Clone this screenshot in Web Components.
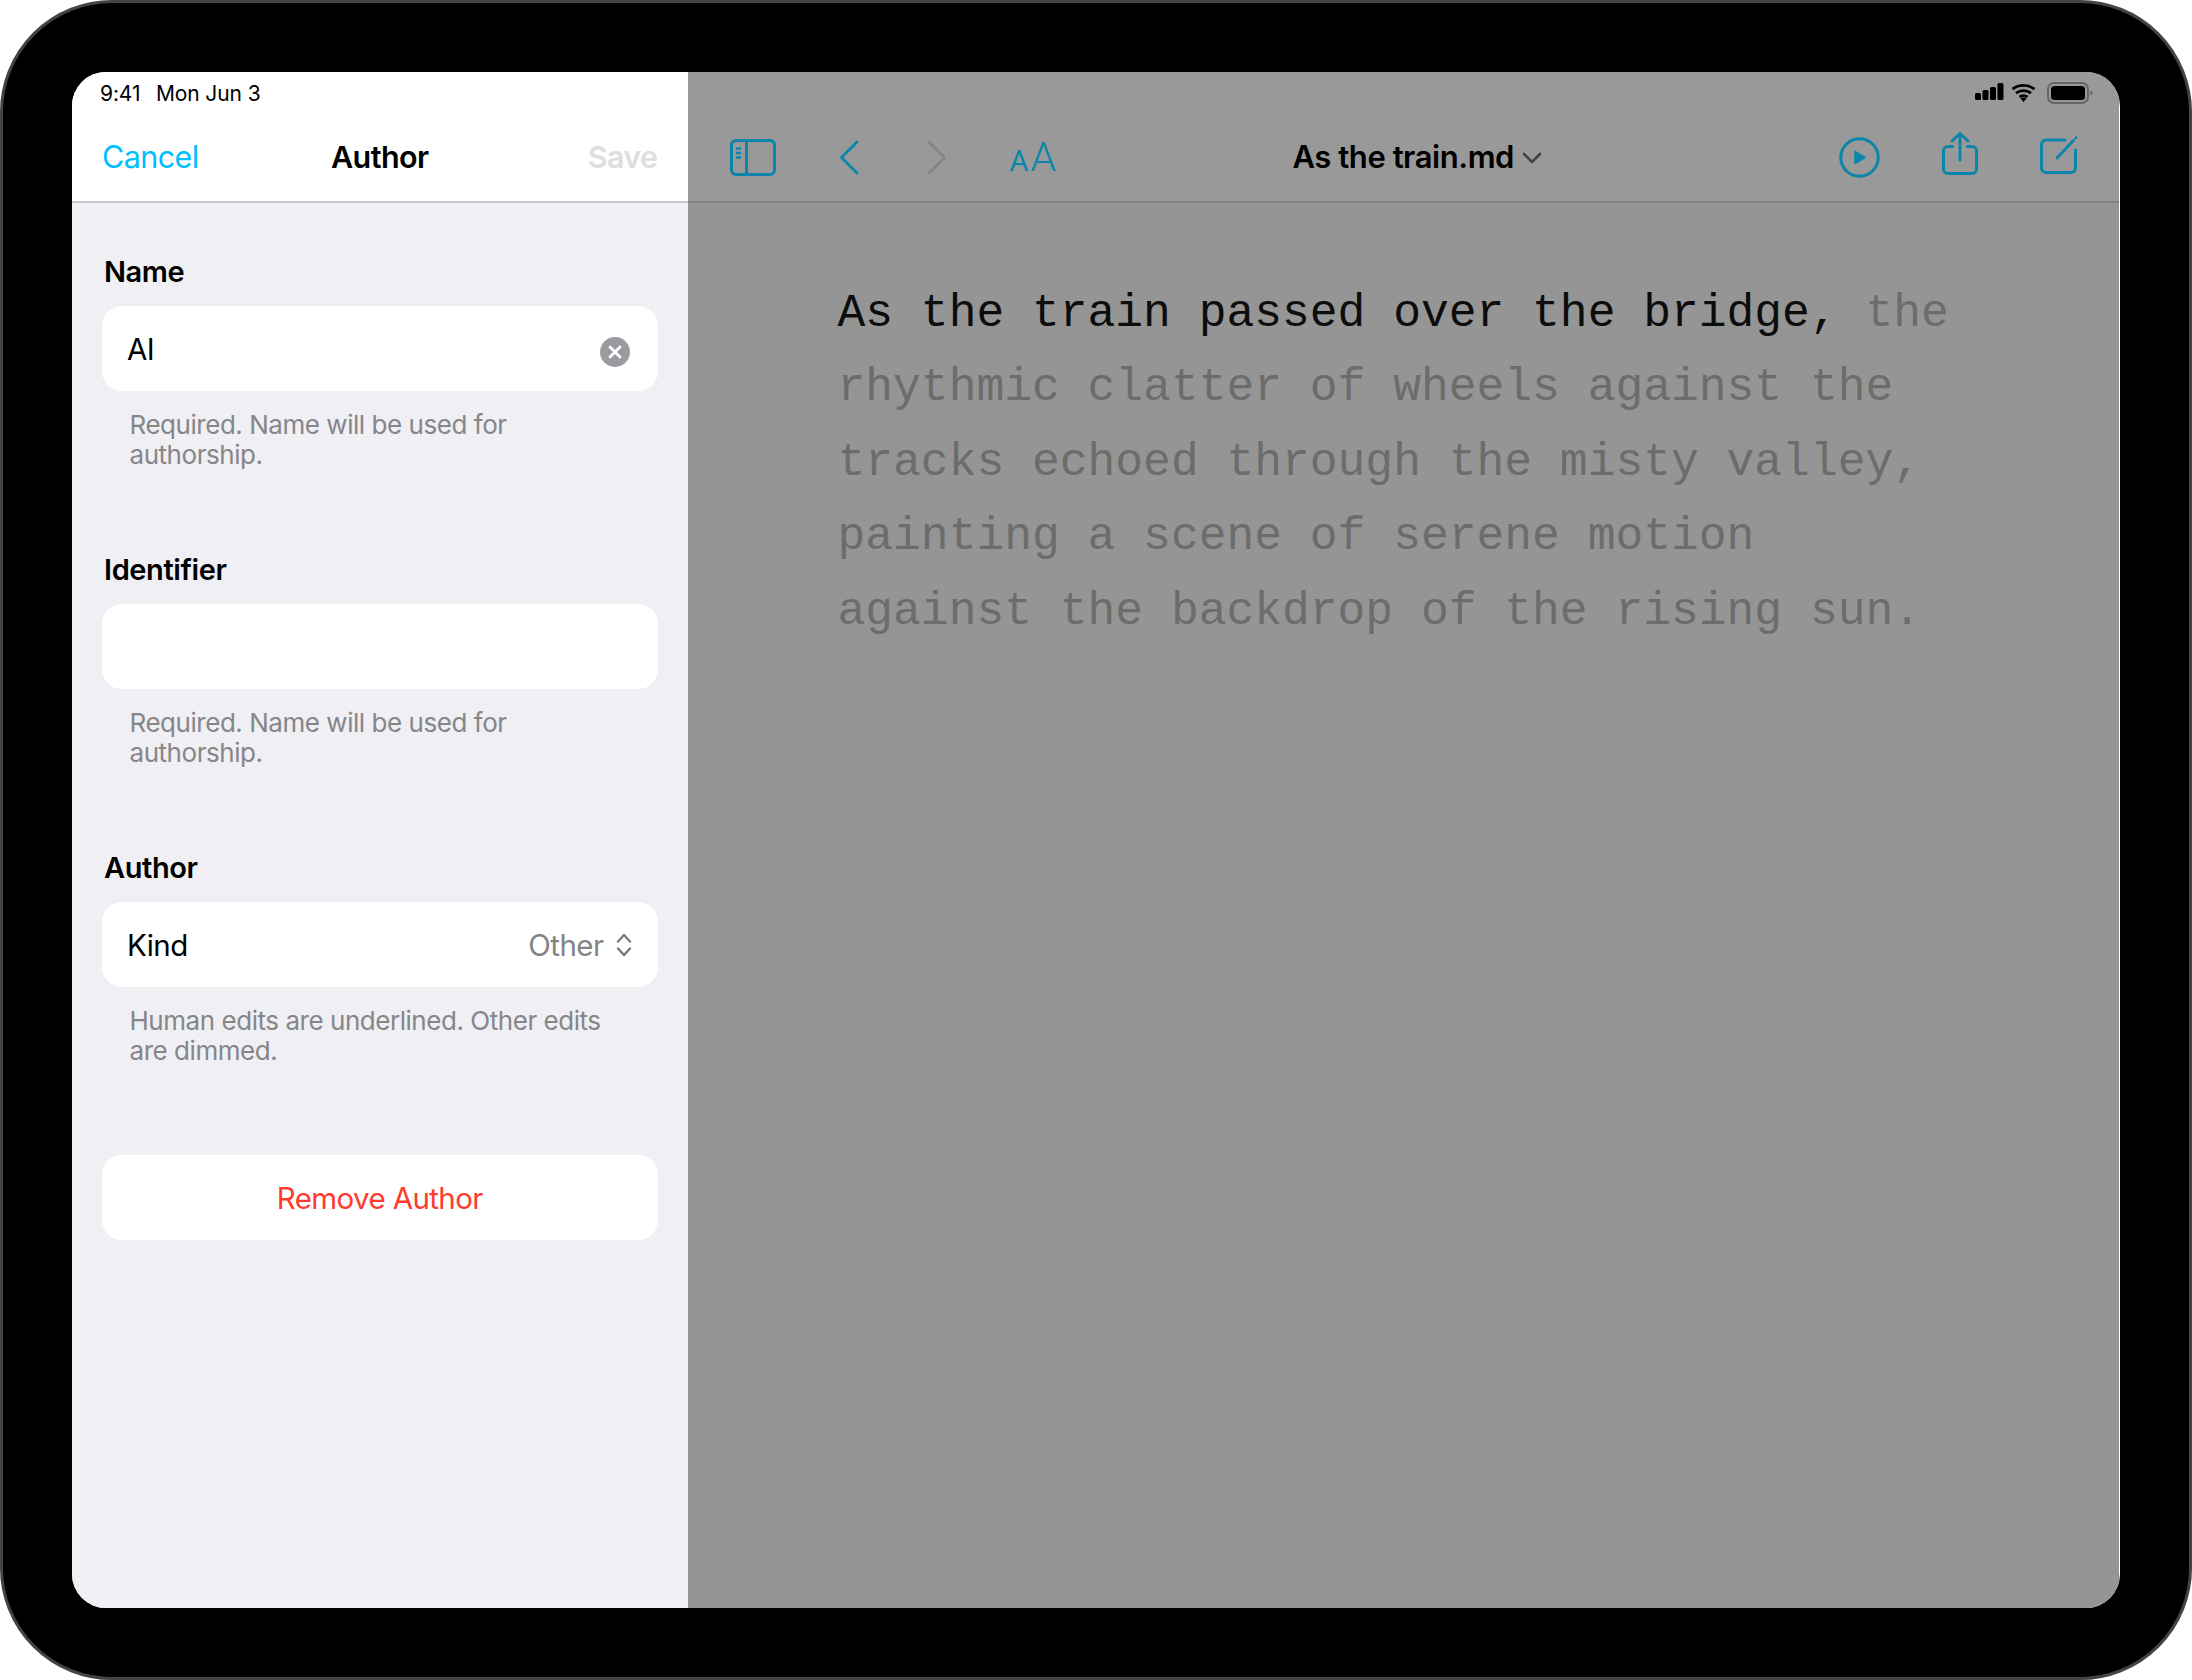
<!DOCTYPE html>
<html lang="en"><head><meta charset="utf-8"><title>Author</title>
<style>
html,body{margin:0;padding:0;background:#fff}
body{font-family:Inter,"Liberation Sans",sans-serif;width:2192px;height:1680px;overflow:hidden}
</style></head><body>
<ipad-frame>
  <author-sheet slot="side">
    <form-section label="Name" help-a="Required. Name will be used for" help-b="authorship.">
      <form-row value="AI" clear></form-row>
    </form-section>
    <form-section label="Identifier" help-a="Required. Name will be used for" help-b="authorship.">
      <form-row></form-row>
    </form-section>
    <form-section label="Author" help-a="Human edits are underlined. Other edits" help-b="are dimmed.">
      <form-row value="Kind" picker="Other"></form-row>
    </form-section>
    <danger-button>Remove Author</danger-button>
  </author-sheet>
  <editor-pane slot="main"></editor-pane>
</ipad-frame>
<script>
function def(name, css, html){
  customElements.define(name, class extends HTMLElement{
    connectedCallback(){
      if(this.shadowRoot) return;
      const r=this.attachShadow({mode:'open'});
      r.innerHTML='<style>'+css+'</style>'+(typeof html==='function'?html(this):html);
    }
  });
}
def('ipad-frame',`
:host{display:block;width:2192px;height:1680px;box-sizing:border-box;background:#000;border:3px solid #444;border-radius:112px;padding:69px}
.screen{width:2048px;height:1536px;display:flex;border-radius:34px;overflow:hidden;background:#fff}
.side{display:block;flex:0 0 615.5px}
.main{display:block;flex:0 0 1431.5px}
`,`<div class="screen"><div class="side"><slot name="side"></slot></div><div class="main"><slot name="main"></slot></div></div>`);

def('author-sheet',`
:host{display:flex;flex-direction:column;height:1536px;background:#efeff4}
header{flex:0 0 130.5px;box-sizing:border-box;background:#fff;border-bottom:2px solid #c8c8cc;display:flex;flex-direction:column}
.status{height:43px;padding:0 0 0 28px;display:flex;align-items:center;gap:15.500px;font-size:21px;color:#000;letter-spacing:-.1px}
.nav{flex:1;display:flex;align-items:center;justify-content:space-between;padding:0 30px 0 30px;font-size:30.5px;letter-spacing:-.6px;position:relative;padding-bottom:3px}
.cancel{color:#00bfff}
.title{position:absolute;left:0;right:0;text-align:center;font-weight:600;color:#000}
.save{color:#dedede;font-weight:600}
.body{padding:50px 30px 0;display:flex;flex-direction:column}
`,`<header><div class="status"><span>9:41</span><span>Mon Jun 3</span></div>
<div class="nav"><span class="cancel">Cancel</span><span class="title">Author</span><span class="save">Save</span></div></header>
<div class="body"><slot></slot></div>`);

def('form-section',`
:host{display:block;margin-bottom:80px}
:host(:nth-of-type(3)){margin-bottom:88px}
.label{height:35px;padding-top:1px;line-height:36px;font-size:29px;font-weight:600;color:#000;padding-left:2px;letter-spacing:-.4px;margin-bottom:17px}
.help{margin-top:19px;padding-left:27.5px;font-size:26px;line-height:30.5px;color:#868689;letter-spacing:-.46px}
.help div{white-space:nowrap}
`,h=>`<div class="label">${h.getAttribute('label')}</div><slot></slot><div class="help"><div>${h.getAttribute('help-a')}</div><div>${h.getAttribute('help-b')}</div></div>`);

def('form-row',`
:host{display:flex;align-items:center;height:85px;box-sizing:border-box;background:#fff;border-radius:20px;padding:2px 25px 0 25px;font-size:29.500px;color:#000;letter-spacing:-.55px}
.v{flex:1}
.clear{width:30px;height:30px;margin:6px 3px 0 0}
.pick{color:#838386;margin-right:11px}
.chev{width:18px;height:26px;margin-right:0}
`,h=>{
  const v=h.getAttribute('value')||'';
  const c=h.hasAttribute('clear')?`<svg class="clear" viewBox="0 0 30 30"><circle cx="15" cy="15" r="15" fill="#9b9b9f"/><path d="M10 10l10 10M20 10L10 20" stroke="#fff" stroke-width="2.800" stroke-linecap="round"/></svg>`:'';
  const p=h.getAttribute('picker');
  const ps=p?`<span class="pick">${p}</span><svg class="chev" viewBox="0 0 18 26"><path d="M3 9.500L9 3l6 6.500M3 16.500L9 23l6-6.500" fill="none" stroke="#7b7b7f" stroke-width="2.400" stroke-linecap="round" stroke-linejoin="round"/></svg>`:'';
  return `<span class="v">${v}</span>${c}${ps}`;
});

def('danger-button',`
:host{display:flex;align-items:center;justify-content:center;height:85px;background:#fff;border-radius:20px;font-size:29.500px;color:#ff3b30;letter-spacing:-.6px;padding-top:1px;box-sizing:border-box}
`,`<slot></slot>`);

def('status-icons',`
:host{display:block;line-height:0}
`,`<svg width="120" height="24" viewBox="0 0 120 24">
<rect x="0" y="11" width="6" height="7" rx="1.500" fill="#000"/><rect x="7.500" y="8" width="6" height="10" rx="1.500" fill="#000"/><rect x="15" y="5" width="6" height="13" rx="1.500" fill="#000"/><rect x="22.500" y="1" width="6" height="17" rx="1.500" fill="#000"/>
<path d="M37.500 7.200a18 18 0 0 1 22 0M41 11.200a12.500 12.500 0 0 1 15 0M44.500 15a7 7 0 0 1 8 0" fill="none" stroke="#000" stroke-width="2.800"/>
<path d="M45.500 16.500a5 5 0 0 1 6 0L48.500 20z" fill="#000"/>
<rect x="73" y="1" width="40" height="20" rx="6" fill="none" stroke="#666" stroke-width="2"/>
<rect x="76" y="4" width="34" height="14" rx="3.500" fill="#000"/>
<path d="M115.500 8.500c1.500.4 2 1.500 2 2.500s-.5 2.100-2 2.500z" fill="#666"/>
</svg>`);

def('tool-icon',`
:host{display:block;line-height:0}
svg{fill:none;stroke:var(--c,#0a86aa);stroke-width:3;stroke-linecap:round;stroke-linejoin:round;display:block}
`,h=>{
  const k=h.getAttribute('kind');
  const m={
   sidebar:`<svg width="46" height="37" viewBox="0 0 46 37"><rect x="1.500" y="1.500" width="43" height="34" rx="4.500"/><path d="M16.500 1.500v34"/><path d="M6 9.500h5M6 14h5M6 18.500h5" stroke-width="2.400" stroke-linecap="butt"/></svg>`,
   back:`<svg width="20" height="35" viewBox="0 0 20 35"><path d="M18 2L2.500 17.500 18 33"/></svg>`,
   fwd:`<svg width="20" height="35" viewBox="0 0 20 35"><path d="M2 2l15.500 15.500L2 33"/></svg>`,
   play:`<svg width="41" height="41" viewBox="0 0 41 41"><circle cx="20.500" cy="20.500" r="18.700"/><path d="M16 14.500v12l10-6z" fill="#0a86aa" stroke-width="1.500"/></svg>`,
   share:`<svg width="36" height="44" viewBox="0 0 36 44"><path d="M10.500 14.500H6a4.500 4.500 0 0 0-4.500 4.500v18A4.500 4.500 0 0 0 6 41.500h24a4.500 4.500 0 0 0 4.500-4.500V19a4.500 4.500 0 0 0-4.500-4.500h-4.500"/><path d="M18 28V2M10 9l8-7.500L26 9"/></svg>`,
   edit:`<svg width="38" height="39" viewBox="0 0 38 39"><path d="M25 5H6a4.500 4.500 0 0 0-4.500 4.500V33A4.500 4.500 0 0 0 6 37.500h25a4.500 4.500 0 0 0 4.500-4.500V15"/><path d="M17 23L33.500 5.500"/><circle cx="36" cy="2.800" r="1.500" fill="#0a86aa" stroke="none"/></svg>`
  };
  return m[k];
});

def('editor-pane',`
:host{display:flex;flex-direction:column;height:1536px;background:#959595}
header{flex:0 0 130.5px;box-sizing:border-box;background:#999;border-bottom:2px solid #808080;display:flex;flex-direction:column;position:relative}
.st{height:44px;display:flex;justify-content:flex-end;align-items:center;padding-right:24px}
.bar{flex:1;display:flex;align-items:center;position:relative;padding-bottom:4px}
.l,.r{display:flex;align-items:center;margin-top:2px}
.l{margin-left:42px}
.back{margin-left:63px;margin-right:68px;--c:#0a86aa}
.fwd{margin-right:63px;--c:#868686}
.aa{display:flex;align-items:baseline;font-family:Roboto,sans-serif;color:#0a86aa;gap:2px;line-height:1}
.aa .s{font-size:29px;font-weight:400}.aa .b{font-size:41px;font-weight:300}
.t{position:absolute;left:0;right:0;display:flex;justify-content:center;align-items:center;gap:8px;font-size:31px;font-weight:600;color:#000;letter-spacing:-.45px;padding-left:28px}
.t svg{margin-top:4px}
.r{margin-left:auto;padding-right:41px}
.share{margin-left:62px;margin-bottom:7px}.edit{margin-left:62px;margin-bottom:5px}
.text{box-sizing:border-box;padding:74px 0 0 150px;font-family:"Liberation Mono",monospace;font-size:46.3px;line-height:74.5px;color:#6c6c6c}
.text div{white-space:pre}
.text b{font-weight:400;color:#0c0c0c}
`,`<header><div class="st"><status-icons></status-icons></div>
<div class="bar"><div class="l"><tool-icon kind="sidebar"></tool-icon><tool-icon class="back" kind="back"></tool-icon><tool-icon class="fwd" kind="fwd"></tool-icon><span class="aa"><span class="s">A</span><span class="b">A</span></span></div>
<div class="t"><span>As the train.md</span><svg width="20" height="12" viewBox="0 0 20 12"><path d="M2 2l8 8 8-8" fill="none" stroke="#444" stroke-width="2.600" stroke-linecap="round" stroke-linejoin="round"/></svg></div>
<div class="r"><tool-icon kind="play"></tool-icon><tool-icon class="share" kind="share"></tool-icon><tool-icon class="edit" kind="edit"></tool-icon></div></div></header>
<div class="text"><div><b>As the train passed over the bridge,</b> the</div><div>rhythmic clatter of wheels against the</div><div>tracks echoed through the misty valley,</div><div>painting a scene of serene motion</div><div>against the backdrop of the rising sun.</div></div>`);
</script>
</body></html>
